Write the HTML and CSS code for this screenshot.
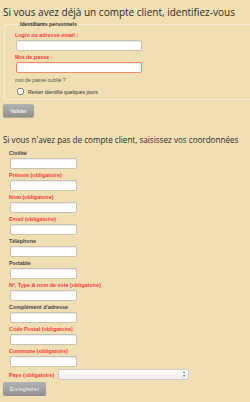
FILE: index.html
```html
<!DOCTYPE html>
<html lang="fr">
<head>
    <meta charset="UTF-8">
    <meta name="viewport" content="width=device-width, initial-scale=1.0">
    <title>Identification</title>
    <link rel="stylesheet" href="styles.css">
</head>
<body>
    <!-- Connexion client existant -->
    <h2 class="titre titre-login">Si vous avez déjà un compte client, identifiez-vous</h2>
    <form class="form-login">
        <fieldset class="ident">
            <legend>Identifiants personnels</legend>
            <label class="lbl obli" for="login">Login ou adresse email :</label>
            <input class="champ champ-long" type="text" id="login">
            <label class="lbl obli" for="mdp">Mot de passe :</label>
            <input class="champ champ-long champ-focus" type="password" id="mdp">
            <a class="oubli" href="#">mot de passe oublié ?</a>
            <div class="rester">
                <input type="checkbox" id="rester">
                <label for="rester">Rester identifié quelques jours</label>
            </div>
        </fieldset>
        <button class="btn btn-valider" type="button">Valider</button>
    </form>

    <!-- Nouveau client -->
    <h2 class="titre titre-nouveau">Si vous n'avez pas de compte client, saisissez vos coordonnées</h2>
    <form class="form-nouveau">
        <label class="lbl">Civilité</label>
        <input class="champ" type="text">
        <label class="lbl obli">Prénom (obligatoire)</label>
        <input class="champ" type="text">
        <label class="lbl obli">Nom (obligatoire)</label>
        <input class="champ" type="text">
        <label class="lbl obli">Email (obligatoire)</label>
        <input class="champ" type="text">
        <label class="lbl">Téléphone</label>
        <input class="champ" type="text">
        <label class="lbl">Portable</label>
        <input class="champ" type="text">
        <label class="lbl obli">Nº, Type &amp; nom de voie (obligatoire)</label>
        <input class="champ" type="text">
        <label class="lbl">Complément d'adresse</label>
        <input class="champ" type="text">
        <label class="lbl obli">Code Postal (obligatoire)</label>
        <input class="champ" type="text">
        <label class="lbl obli">Commune (obligatoire)</label>
        <input class="champ" type="text">
        <div class="pays">
            <label class="lbl obli">Pays (obligatoire)</label>
            <div class="liste-wrap">
                <select class="liste"><option></option></select>
                <span class="fleches">▴<br>▾</span>
            </div>
        </div>
        <button class="btn btn-enreg" type="button">Enregistrer</button>
    </form>
</body>
</html>
```

FILE: styles.css
```css
* {
    margin: 0;
    padding: 0;
    box-sizing: border-box;
}

body {
    font-family: 'Liberation Sans', sans-serif;
    background-color: #efdfb3;
    color: #333;
    overflow: hidden;
}

.titre {
    font-family: 'Open Sans', sans-serif;
    font-weight: normal;
    color: #2b2b2b;
    white-space: nowrap;
    padding-left: 3px;
}

.titre-login {
    font-size: 10px;
    line-height: 13px;
    padding-top: 6px;
}

.titre-nouveau {
    font-size: 8.1px;
    line-height: 12px;
    margin-top: 17px;
}

/* fieldset identifiants */
.ident {
    border: 1px solid #f6ecd2;
    margin: 1px -4px 0 4px;
    padding: 1px 10px 4px 10px;
}

.ident legend {
    font-size: 5.2px;
    font-weight: bold;
    color: #333;
    padding: 0 2px;
    margin-left: 3px;
    line-height: 8px;
}

.lbl {
    display: block;
    font-size: 5.4px;
    font-weight: bold;
    line-height: 8px;
    color: #444;
}

.lbl.obli {
    color: #ff3b3b;
}

.ident .lbl {
    margin-top: 2px;
}

.champ {
    display: block;
    width: 67px;
    height: 11px;
    margin-top: 1px;
    margin-bottom: 2px;
    background: #fff;
    border: 1px solid #c8c2b2;
    border-radius: 2px;
    box-shadow: inset 0 1px 1px rgba(0, 0, 0, 0.08);
}

.champ-long {
    width: 126px;
    margin-left: 1px;
}

.champ-focus {
    border-color: #ef8a66;
}

.oubli {
    display: block;
    font-size: 5.2px;
    line-height: 8px;
    margin-top: 3px;
    color: #555;
    text-decoration: none;
}

.rester {
    display: flex;
    align-items: center;
    gap: 4px;
    margin-top: 4px;
    margin-left: 2px;
    font-size: 5.2px;
    color: #333;
}

.rester input {
    width: 7px;
    height: 7px;
    margin: 0;
}

.btn {
    display: block;
    font-family: 'Liberation Sans', sans-serif;
    font-weight: bold;
    color: #eee;
    background: linear-gradient(#b3b3b3, #8f8f8f);
    border: none;
    border-radius: 2px;
    box-shadow: 0 1px 1px rgba(0, 0, 0, 0.25);
    margin-left: 3px;
}

.btn-valider {
    width: 31px;
    height: 13px;
    font-size: 5px;
    margin-top: 4px;
}

.form-nouveau {
    padding-left: 10px;
    margin-top: 3px;
}

.form-nouveau .lbl {
    margin-left: -1px;
}

.pays {
    display: flex;
    align-items: center;
    gap: 4px;
    margin-top: 1px;
}

.liste-wrap {
    position: relative;
}

.liste {
    display: block;
    appearance: none;
    width: 131px;
    height: 11px;
    background: linear-gradient(#fff, #eee);
    border: 1px solid #ccc;
    border-radius: 2px;
}

.fleches {
    position: absolute;
    right: 4px;
    top: 1px;
    font-size: 4px;
    line-height: 4px;
    color: #666;
}

.btn-enreg {
    width: 43px;
    height: 14px;
    font-size: 6px;
    font-weight: normal;
    margin-left: -7px;
    margin-top: 2px;
}
```
